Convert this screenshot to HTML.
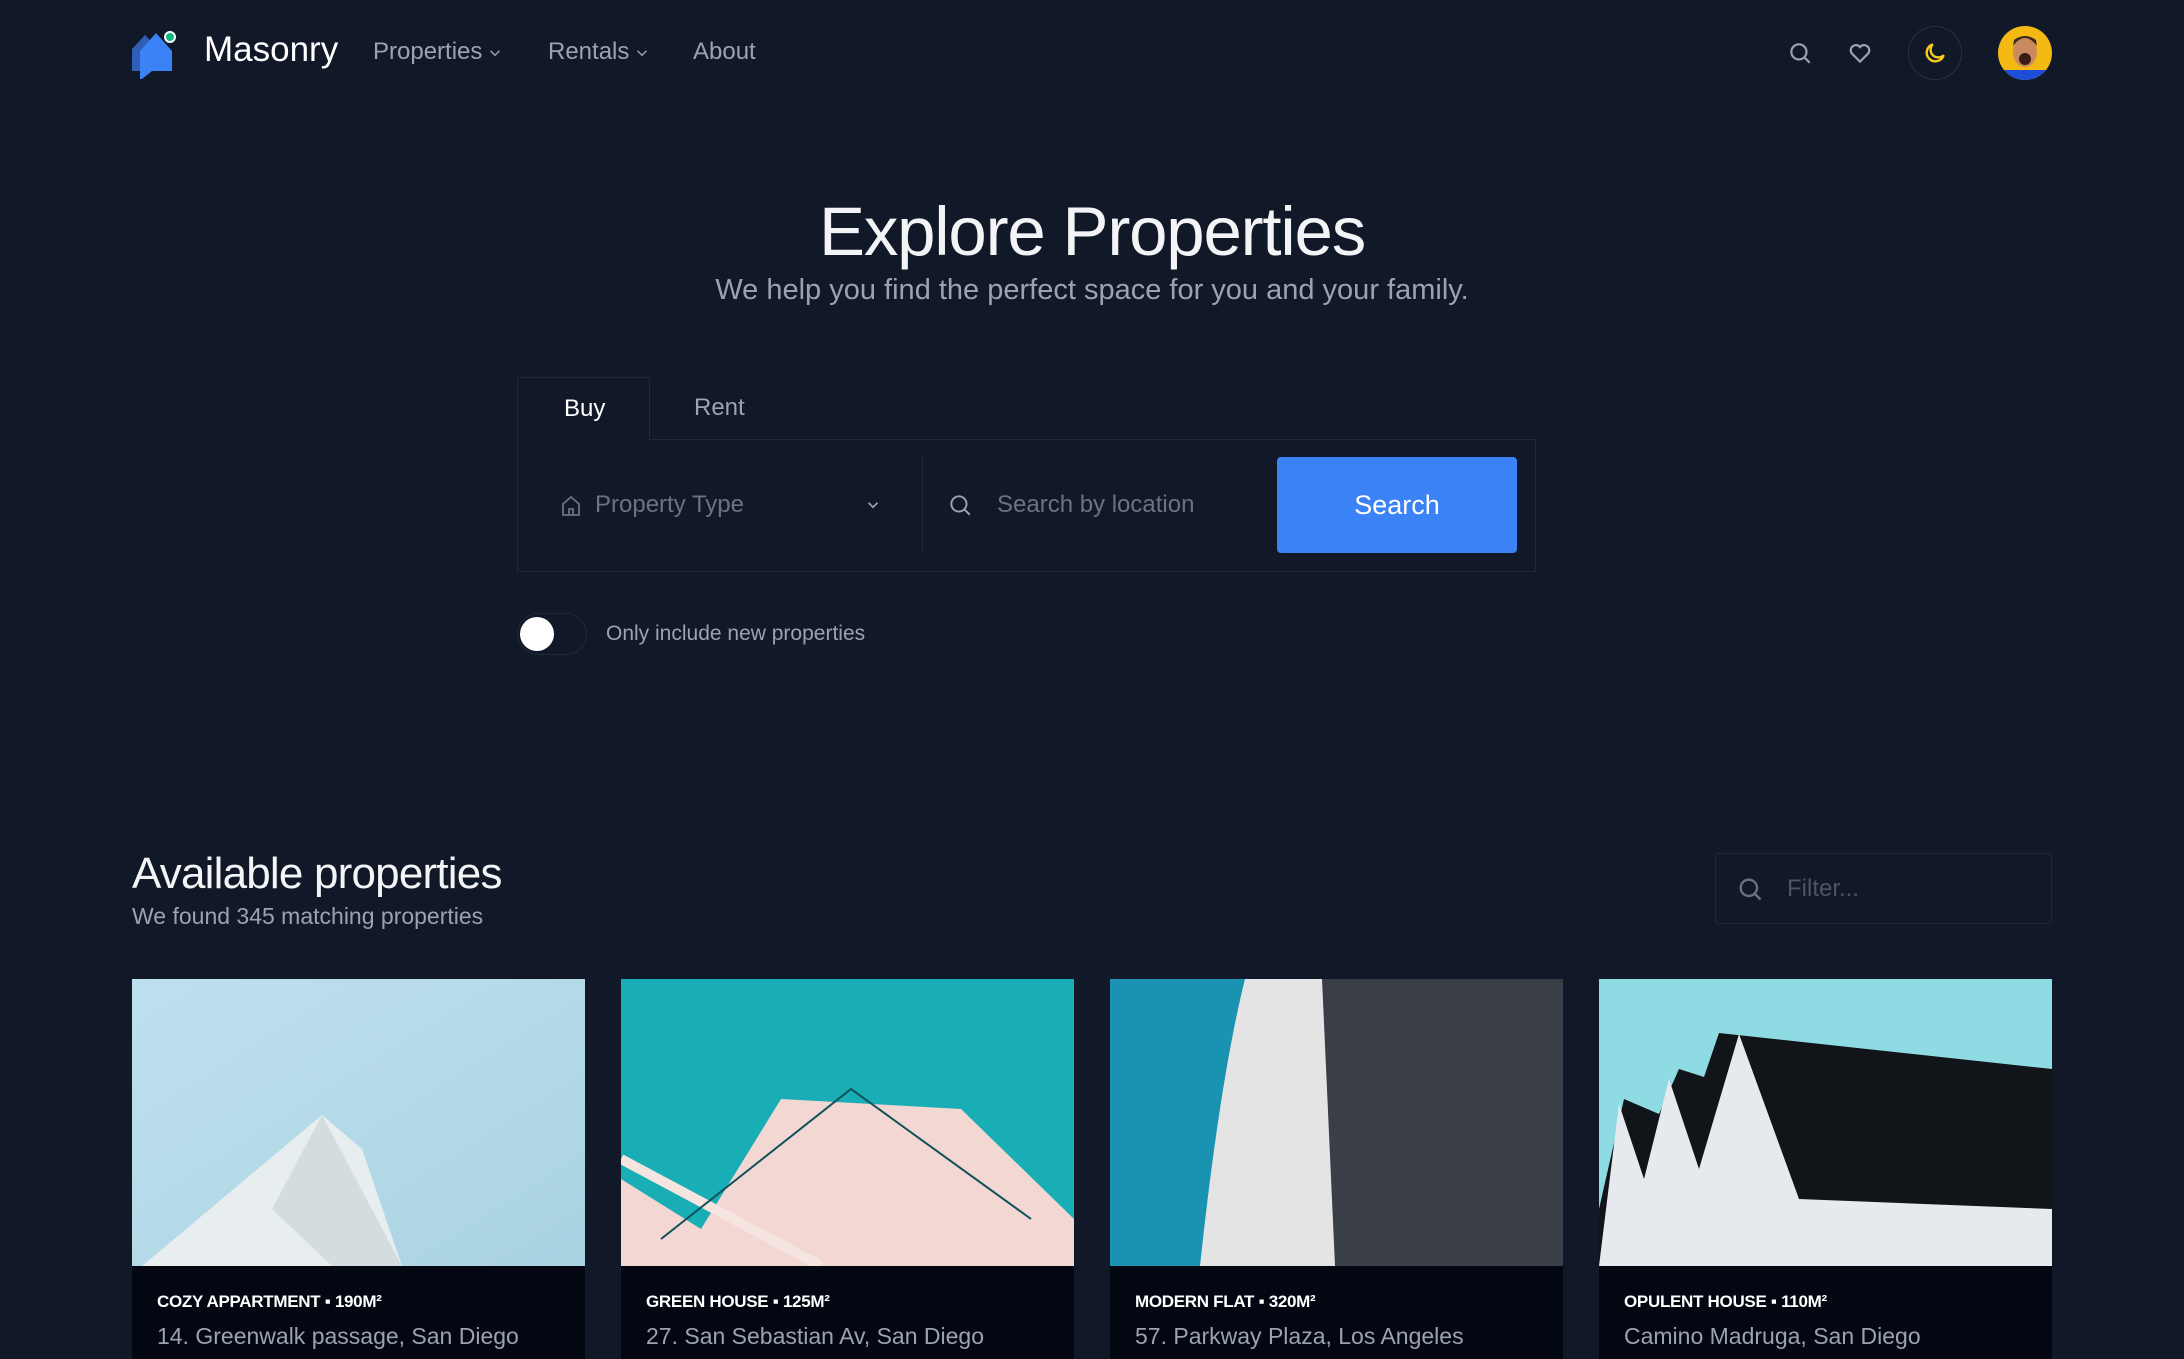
<!DOCTYPE html>
<html><head><meta charset="utf-8"><style>
*{margin:0;padding:0;box-sizing:border-box}
body{width:2184px;height:1347px;background:#111827;font-family:"Liberation Sans",sans-serif;position:relative;overflow:hidden;color:#fff}
.a{position:absolute;white-space:nowrap}
.nav{color:#9ca3af;font-size:24px;top:38px}
.nav svg{vertical-align:middle;margin-left:4px}
.card{position:absolute;top:979px;width:453px;height:380px;background:#030712}
.card svg{display:block}
.lbl{position:absolute;left:25px;top:313px;font-size:17px;font-weight:bold;color:#fff;letter-spacing:-0.3px}
.adr{position:absolute;left:25px;top:344px;font-size:23px;color:#9ca3af}
</style></head><body>
<svg class="a" style="left:130px;top:27px" width="52" height="52" viewBox="0 0 52 52">
<path d="M2 22 L15 8 L26 20 L26 44 L2 44 Z" fill="#2f5eb8"/>
<path d="M10 24 L26 6 L42 24 L42 44 L22 44 L12 52 L10 52 Z" fill="#3b82f6"/>
<circle cx="40" cy="10" r="5" fill="#10b981" stroke="#fff" stroke-width="2"/>
</svg>
<div class="a" style="left:204px;top:30px;font-size:35px;color:#fff">Masonry</div>
<div class="a nav" style="left:373px">Properties<svg width="18" height="18" viewBox="0 0 24 24" fill="none" stroke="#9ca3af" stroke-width="2"><path d="M6 9l6 6 6-6"/></svg></div>
<div class="a nav" style="left:548px">Rentals<svg width="18" height="18" viewBox="0 0 24 24" fill="none" stroke="#9ca3af" stroke-width="2"><path d="M6 9l6 6 6-6"/></svg></div>
<div class="a nav" style="left:693px">About</div>
<svg class="a" style="left:1787px;top:40px" width="26" height="26" viewBox="0 0 24 24" fill="none" stroke="#9ca3af" stroke-width="2"><circle cx="11" cy="11" r="7"/><path d="M16 16l5 5"/></svg>
<svg class="a" style="left:1847px;top:40px" width="26" height="26" viewBox="0 0 24 24" fill="none" stroke="#9ca3af" stroke-width="2"><path d="M12 20l-7.5-7.5a4.5 4.5 0 0 1 7.5-6 4.5 4.5 0 0 1 7.5 6z"/></svg>
<div class="a" style="left:1908px;top:26px;width:54px;height:54px;border:1px solid #273142;border-radius:50%"></div>
<svg class="a" style="left:1922px;top:40px" width="26" height="26" viewBox="0 0 24 24" fill="none" stroke="#facc15" stroke-width="2.2"><path d="M20 14A8 8 0 1 1 10 4a6 6 0 0 0 10 10z"/></svg>
<svg class="a" style="left:1998px;top:26px" width="54" height="54" viewBox="0 0 54 54"><defs><clipPath id="c"><circle cx="27" cy="27" r="27"/></clipPath></defs><g clip-path="url(#c)"><rect width="54" height="54" fill="#f5b914"/><ellipse cx="27" cy="26" rx="12" ry="15" fill="#c98a5f"/><path d="M15 20 Q27 4 39 20 L38 14 Q27 6 16 14Z" fill="#3b2a1e"/><ellipse cx="27" cy="33" rx="6" ry="6" fill="#3a1c14"/><rect x="0" y="44" width="54" height="12" fill="#1d4ed8"/></g></svg>

<div class="a" style="left:0;width:2184px;text-align:center;top:192px;font-size:69px;color:#f3f4f6;letter-spacing:-1.2px">Explore Properties</div>
<div class="a" style="left:0;width:2184px;text-align:center;top:274px;font-size:29px;color:#9ca3af">We help you find the perfect space for you and your family.</div>

<div class="a" style="left:517px;top:377px;width:133px;height:64px;border:1px solid #1f2937;border-bottom:none;background:#111827;z-index:2"></div>
<div class="a" style="left:564px;top:395px;font-size:24px;color:#fff;z-index:3">Buy</div>
<div class="a" style="left:694px;top:394px;font-size:24px;color:#9ca3af">Rent</div>
<div class="a" style="left:517px;top:439px;width:1019px;height:133px;border:1px solid #1f2937"></div>
<svg class="a" style="left:559px;top:494px" width="24" height="24" viewBox="0 0 24 24" fill="none" stroke="#6b7280" stroke-width="1.8"><path d="M4 10l8-7 8 7v11H4z"/><path d="M10 21v-6h4v6"/></svg>
<div class="a" style="left:595px;top:491px;font-size:24px;color:#6b7280">Property Type</div>
<svg class="a" style="left:864px;top:496px" width="18" height="18" viewBox="0 0 24 24" fill="none" stroke="#9ca3af" stroke-width="2.2"><path d="M6 9l6 6 6-6"/></svg>
<div class="a" style="left:922px;top:457px;width:1px;height:96px;background:#1f2937"></div>
<svg class="a" style="left:947px;top:492px" width="26" height="26" viewBox="0 0 24 24" fill="none" stroke="#9ca3af" stroke-width="1.8"><circle cx="11" cy="11" r="7"/><path d="M16 16l5 5"/></svg>
<div class="a" style="left:997px;top:491px;font-size:24px;color:#6b7280">Search by location</div>
<div class="a" style="left:1277px;top:457px;width:240px;height:96px;background:#3b82f6;border-radius:4px;font-size:27px;color:#fff;text-align:center;line-height:96px">Search</div>

<div class="a" style="left:517px;top:613px;width:70px;height:42px;border:1px solid #1f2937;border-radius:21px"></div>
<div class="a" style="left:520px;top:617px;width:34px;height:34px;background:#fff;border-radius:50%"></div>
<div class="a" style="left:606px;top:622px;font-size:21px;color:#9ca3af">Only include new properties</div>

<div class="a" style="left:132px;top:849px;font-size:44px;color:#f3f4f6;letter-spacing:-0.8px">Available properties</div>
<div class="a" style="left:132px;top:903px;font-size:23px;color:#9ca3af">We found 345 matching properties</div>
<div class="a" style="left:1715px;top:853px;width:337px;height:71px;border:1px solid #1f2937;border-radius:3px"></div>
<svg class="a" style="left:1736px;top:875px" width="28" height="28" viewBox="0 0 24 24" fill="none" stroke="#6b7280" stroke-width="2"><circle cx="11" cy="11" r="7"/><path d="M16 16l5 5"/></svg>
<div class="a" style="left:1787px;top:875px;font-size:24px;color:#4b5563">Filter...</div>

<div class="card" style="left:132px"><svg width="453" height="287" viewBox="0 0 453 287"><defs><linearGradient id="g1" x1="0" y1="0" x2="1" y2="1"><stop offset="0" stop-color="#bfe0ee"/><stop offset="1" stop-color="#a9d3e2"/></linearGradient></defs><rect width="453" height="287" fill="url(#g1)"/><path d="M10 287 L190 136 L230 170 L270 287Z" fill="#e8eef0"/><path d="M190 136 L270 287 L200 287 L140 230Z" fill="#d3dde0"/></svg>
<div class="lbl">COZY APPARTMENT ▪ 190M²</div><div class="adr">14. Greenwalk passage, San Diego</div></div>
<div class="card" style="left:621px"><svg width="453" height="287" viewBox="0 0 453 287"><rect width="453" height="287" fill="#19adb5"/><path d="M0 200 L0 287 L453 287 L453 240 L340 130 L160 120 L80 250 Z" fill="#f3d7d3"/><path d="M0 180 L200 287" stroke="#f5e4e0" stroke-width="10"/><path d="M40 260 L230 110 L410 240" stroke="#10505a" stroke-width="2" fill="none"/></svg>
<div class="lbl">GREEN HOUSE ▪ 125M²</div><div class="adr">27. San Sebastian Av, San Diego</div></div>
<div class="card" style="left:1110px"><svg width="453" height="287" viewBox="0 0 453 287"><rect width="453" height="287" fill="#1a93b3"/><path d="M135 0 L453 0 L453 287 L90 287 Q110 100 135 0Z" fill="#e4e4e4"/><path d="M212 0 L453 0 L453 287 L225 287Z" fill="#3a3e47"/></svg>
<div class="lbl">MODERN FLAT ▪ 320M²</div><div class="adr">57. Parkway Plaza, Los Angeles</div></div>
<div class="card" style="left:1599px"><svg width="453" height="287" viewBox="0 0 453 287"><rect width="453" height="287" fill="#8fdbe3"/><path d="M0 287 L0 230 L25 120 L60 135 L80 90 L105 98 L120 54 L453 90 L453 287Z" fill="#111418"/><path d="M0 287 L20 125 L45 200 L70 100 L100 190 L140 55 L200 220 L453 230 L453 287Z" fill="#e6eaee"/></svg>
<div class="lbl">OPULENT HOUSE ▪ 110M²</div><div class="adr">Camino Madruga, San Diego</div></div>
</body></html>
